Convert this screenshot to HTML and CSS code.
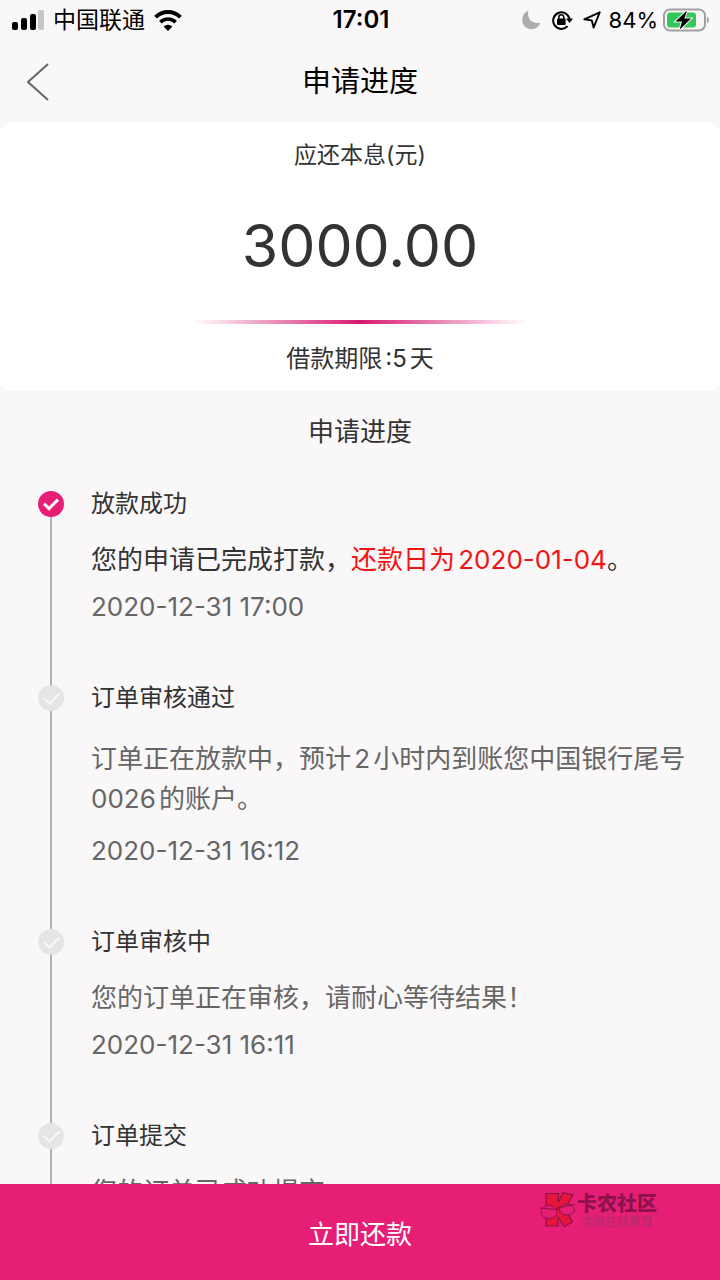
FILE: index.html
```html
<!DOCTYPE html>
<html lang="zh-CN">
<head>
    <meta charset="UTF-8">
    <meta name="viewport" content="width=device-width, initial-scale=1.0">
    <title>申请进度</title>
    <link rel="stylesheet" href="styles.css">
</head>
<body>

<div class="status-bar">
    <div class="status-left">
        <svg class="icon-signal" width="32" height="20" viewBox="0 0 32 20">
            <rect x="0" y="12" width="6" height="8" rx="2"/>
            <rect x="9" y="8" width="6" height="12" rx="2"/>
            <rect x="18" y="4" width="6" height="16" rx="2"/>
            <rect x="26" y="0" width="6" height="20" rx="2" fill="#c7c6c7"/>
        </svg>
        <span class="carrier">中国联通</span>
        <svg width="28" height="21" viewBox="0 0 28 21">
            <path d="M1.6 7.2 A17.5 17.5 0 0 1 26.4 7.2" fill="none" stroke="#000" stroke-width="4"/>
            <path d="M6.4 12.2 A10.6 10.6 0 0 1 21.6 12.2" fill="none" stroke="#000" stroke-width="3.6"/>
            <path d="M14 21 L9.6 16.6 A6.2 6.2 0 0 1 18.4 16.6 Z"/>
        </svg>
    </div>
    <span class="clock">17:01</span>
    <div class="status-right">
        <svg width="19" height="20" viewBox="0 0 19 20">
            <path d="M6.5 0.5 C4.5 7.5 9 14.5 18.5 12.8 C16.8 16.8 13.5 19.2 9.6 19.2 C4.3 19.2 0.3 15.1 0.3 9.9 C0.3 5.6 2.8 1.9 6.5 0.5 Z" fill="#aeadae"/>
        </svg>
        <svg class="icon-lock" width="21" height="20" viewBox="0 0 21 20">
            <path d="M15.6 16.2 A8.3 8.3 0 1 1 17.6 9" fill="none" stroke="#000" stroke-width="2"/>
            <path d="M14 8.5 H21 L17.5 13 Z"/>
            <rect x="5" y="8.6" width="8.6" height="6.4" rx="1"/>
            <path d="M6.8 9 V7.2 A2.5 2.5 0 0 1 11.8 7.2 V9" fill="none" stroke="#000" stroke-width="1.5"/>
        </svg>
        <svg class="icon-location" width="18" height="18" viewBox="0 0 18 18">
            <path d="M1.3 8.4 L16.7 1.3 L10.6 16.6 L8.8 9.4 Z" fill="none" stroke="#000" stroke-width="1.9" stroke-linejoin="round"/>
        </svg>
        <span class="battery-level">84%</span>
        <svg width="47" height="24" viewBox="0 0 47 24">
            <rect x="1" y="1.5" width="41" height="21" rx="6" fill="none" stroke="#a0a0a0" stroke-width="2"/>
            <path d="M44 8.5 C46.4 10 46.4 14 44 15.5 Z" fill="#a0a0a0"/>
            <rect x="4" y="4.5" width="29" height="15" rx="3" fill="#35c759"/>
            <path d="M24 2.5 L12.5 13.6 H19 L16.6 21.8 L28 10.4 H21.4 Z" stroke="#f9f7f8" stroke-width="2" paint-order="stroke"/>
        </svg>
    </div>
</div>

<header class="nav-bar">
    <button class="back" type="button" aria-label="返回">
        <svg width="22" height="38" viewBox="0 0 22 38">
            <path d="M21 1 L1 19 L21 37" fill="none" stroke="#666" stroke-width="2"/>
        </svg>
    </button>
    <h1>申请进度</h1>
</header>

<main class="content">
    <section class="card">
        <p class="card-label">应还本息(元)</p>
        <p class="amount">3000.00</p>
        <div class="divider"></div>
        <p class="term">借款期限:5天</p>
    </section>

    <h2>申请进度</h2>

    <ol class="timeline">
        <li class="step active">
            <div class="marker">
                <svg class="dot" width="26" height="26" viewBox="0 0 26 26">
                    <circle cx="13" cy="13" r="13"/>
                    <path d="M6 12.6 L11 17.6 L20 8.6"/>
                </svg>
            </div>
            <div class="step-body">
                <h3>放款成功</h3>
                <p class="desc">您的申请已完成打款，<span class="due">还款日为2020-01-04</span>。</p>
                <time>2020-12-31 17:00</time>
            </div>
        </li>
        <li class="step">
            <div class="marker">
                <svg class="dot" width="26" height="26" viewBox="0 0 26 26">
                    <circle cx="13" cy="13" r="13"/>
                    <path d="M5.5 12.8 L11.5 18.5 L21.5 8.5"/>
                </svg>
            </div>
            <div class="step-body">
                <h3>订单审核通过</h3>
                <p class="desc desc-long">订单正在放款中，预计2小时内到账您中国银行尾号0026的账户。</p>
                <time>2020-12-31 16:12</time>
            </div>
        </li>
        <li class="step">
            <div class="marker">
                <svg class="dot" width="26" height="26" viewBox="0 0 26 26">
                    <circle cx="13" cy="13" r="13"/>
                    <path d="M5.5 12.8 L11.5 18.5 L21.5 8.5"/>
                </svg>
            </div>
            <div class="step-body">
                <h3>订单审核中</h3>
                <p class="desc">您的订单正在审核，请耐心等待结果！</p>
                <time>2020-12-31 16:11</time>
            </div>
        </li>
        <li class="step">
            <div class="marker">
                <svg class="dot" width="26" height="26" viewBox="0 0 26 26">
                    <circle cx="13" cy="13" r="13"/>
                    <path d="M5.5 12.8 L11.5 18.5 L21.5 8.5"/>
                </svg>
            </div>
            <div class="step-body">
                <h3>订单提交</h3>
                <p class="desc">您的订单已成功提交</p>
            </div>
        </li>
    </ol>
</main>

<footer class="footer">
    <button class="repay" type="button">立即还款</button>
    <div class="watermark">
        <svg width="36" height="36" viewBox="0 0 36 36">
            <path d="M6 1.5 H18.5 V10 L23 1 L33 2.5 L25 17 L32.5 30 L24 34.5 L18 25 V34 H6 Z" fill="#e5153c" stroke="#8e1249" stroke-width="1.2"/>
            <ellipse cx="9" cy="20" rx="8" ry="6.5" fill="#e61e76" stroke="#8e1249"/>
            <ellipse cx="27" cy="17.5" rx="7.5" ry="5.5" fill="#e61e76" stroke="#8e1249"/>
            <path d="M0.5 16 L17 17.5 Q18 15 20 15.5 L34.5 12.5" fill="none" stroke="#8e1249" stroke-width="1.2"/>
        </svg>
        <div class="watermark-text">
            <strong>卡农社区</strong>
            <small>金融在线教育</small>
        </div>
    </div>
</footer>

</body>
</html>
```
FILE: styles.css
```css
* {
    box-sizing: border-box;
}

body {
    display: flex;
    flex-direction: column;
    height: 100vh;
    margin: 0;
    background-color: #f9f7f8;
    color: #333;
    font-family: Inter, "Noto Sans CJK SC", sans-serif;
    text-autospace: normal;
}

h1, h2, h3, p, ol {
    margin: 0;
    padding: 0;
    font-weight: 400;
}

button {
    border: none;
    padding: 0;
    background: none;
    font-family: inherit;
    cursor: pointer;
}

svg {
    display: block;
    flex: none;
}

/* 状态栏 */
.status-bar {
    display: grid;
    grid-template-columns: 1fr auto 1fr;
    align-items: center;
    height: 40px;
    padding: 0 10px 0 12px;
    color: #000;
    font-size: 23px;
    line-height: 40px;
}

.status-left {
    display: flex;
    align-items: center;
    gap: 9px;
}

.status-right {
    display: flex;
    align-items: center;
    justify-content: flex-end;
    gap: 5px;
}

.icon-lock {
    margin-left: 6px;
}

.icon-location {
    margin: 0 3px 0 5px;
}

.battery-level {
    font-size: 22px;
}

.clock {
    font-size: 24px;
    font-weight: 600;
}

/* 导航栏 */
.nav-bar {
    display: grid;
    grid-template-columns: 1fr auto 1fr;
    align-items: center;
    height: 83px;
    flex: none;
    padding: 0 27px;
}

.back {
    justify-self: start;
}

h1 {
    color: #000;
    font-size: 29px;
    line-height: 40px;
}

/* 主体内容 */
.content {
    flex: 1;
    min-height: 0;
    overflow-y: auto;
    scrollbar-width: none;
}

.card {
    display: flex;
    flex-direction: column;
    align-items: center;
    padding: 15px 0;
    background-color: #fff;
    border-radius: 10px;
}

.card-label {
    font-size: 23px;
    line-height: 34px;
}

.amount {
    margin: 36px 0;
    font-size: 59px;
    line-height: 76px;
}

.divider {
    width: 46%;
    height: 4px;
    background: linear-gradient(to right, rgba(215, 24, 112, 0), #d71870, rgba(215, 24, 112, 0));
}

.term {
    margin-top: 18px;
    font-size: 24px;
    line-height: 34px;
}

h2 {
    padding: 24px 0 20px;
    font-size: 26px;
    line-height: 34px;
    text-align: center;
}

/* 进度时间线 */
.timeline {
    padding: 22px 24px 0 38px;
    list-style: none;
}

.step {
    display: flex;
    gap: 27px;
}

.marker {
    display: flex;
    flex-direction: column;
    align-items: center;
}

.marker::after {
    content: "";
    flex: 1;
    width: 2px;
    background-color: #b3b1b2;
}

.dot circle {
    fill: #e5e5e5;
}

.dot path {
    fill: none;
    stroke: #f9f7f8;
    stroke-width: 2;
}

.active .dot circle {
    fill: #e61e76;
}

.active .dot path {
    stroke: #fff;
    stroke-width: 3;
}

.step-body {
    flex: 1;
    padding-bottom: 65px;
    color: #666;
}

h3 {
    color: #333;
    font-size: 24px;
    line-height: 26px;
}

.desc {
    margin: 23px 0 14px;
    font-size: 26px;
    line-height: 40px;
}

.desc-long {
    padding: 5px 0;
}

.active .desc {
    color: #333;
}

.active .due {
    color: #f01414;
}

time {
    display: block;
    font-size: 26px;
    line-height: 26px;
}

/* 底部按钮 */
.footer {
    position: relative;
    flex: none;
}

.repay {
    display: block;
    width: 100%;
    height: 96px;
    background-color: #e61e76;
    color: #fff;
    font-size: 26px;
}

.watermark {
    position: absolute;
    top: 8px;
    right: 63px;
    display: flex;
    gap: 1px;
    color: #8e1249;
    pointer-events: none;
}

.watermark-text {
    display: flex;
    flex-direction: column;
    align-items: center;
}

.watermark strong {
    font-size: 20px;
    font-weight: 900;
    line-height: 24px;
}

.watermark small {
    color: #b82a6c;
    font-size: 12px;
    font-weight: 500;
    line-height: 12px;
}
```
